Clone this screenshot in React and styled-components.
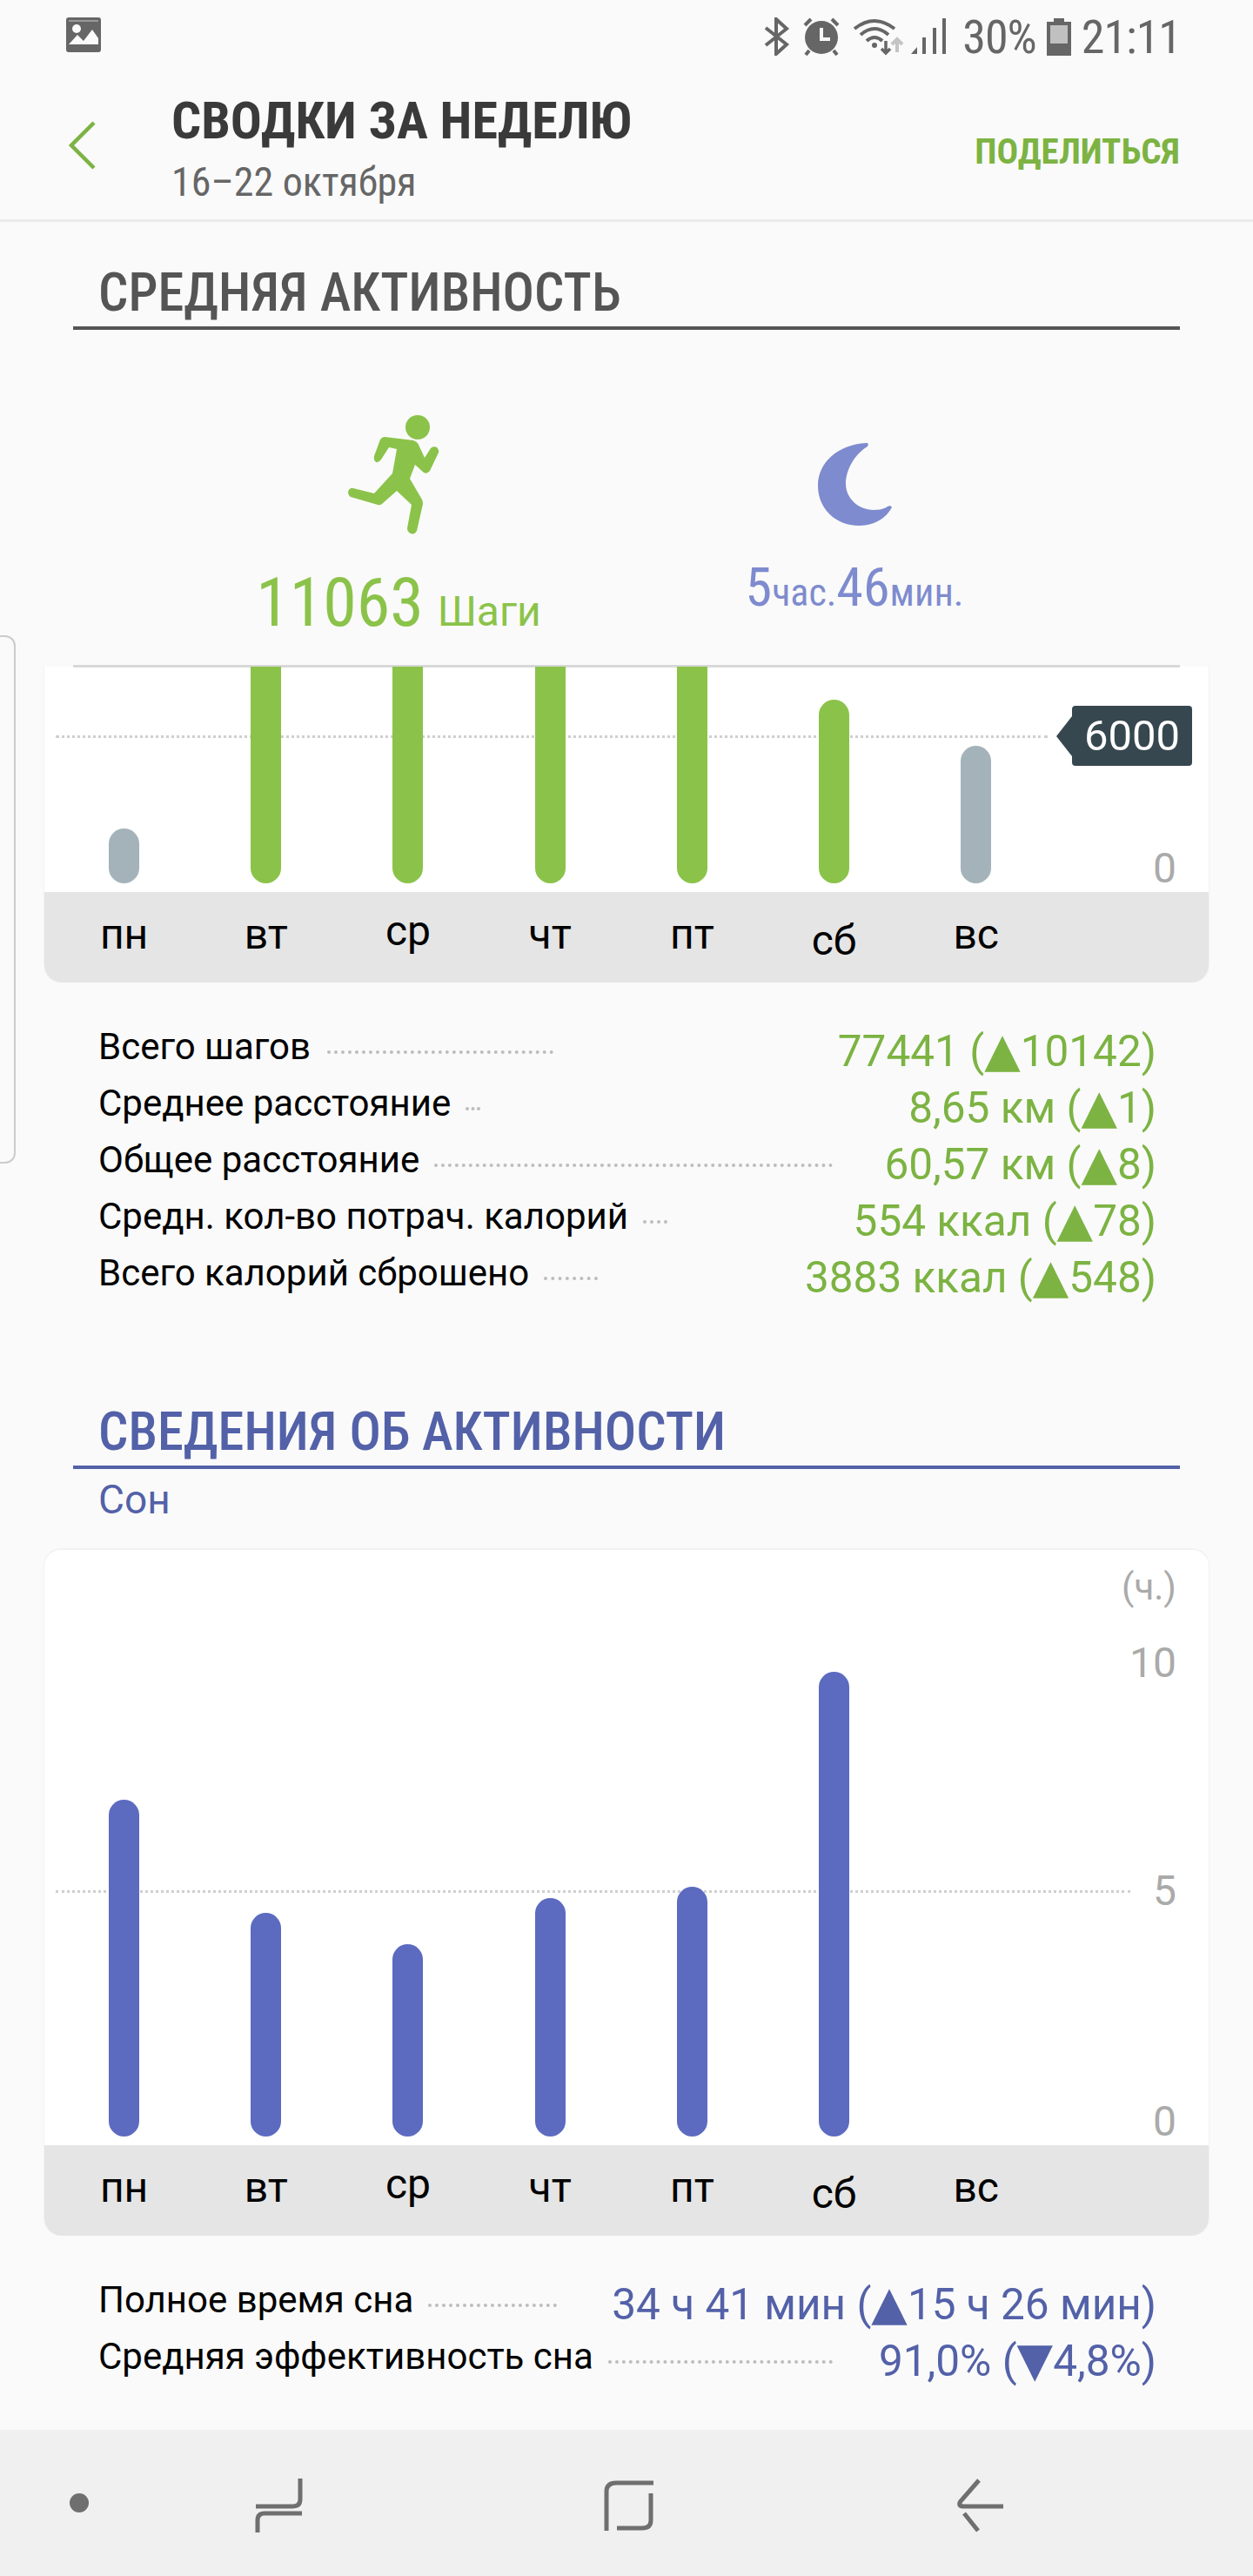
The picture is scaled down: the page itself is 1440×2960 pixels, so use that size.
import React from 'react';
import styled, { createGlobalStyle } from 'styled-components';

const GREEN = '#7cb342';
const BLUE = '#5361a8';

const GlobalStyle = createGlobalStyle`
  html, body { margin: 0; padding: 0; background: #fafafa; }
  * { box-sizing: border-box; }
  body { font-family: Roboto, "Noto Sans", sans-serif; }
`;

const Page = styled.div`
  position: relative;
  width: 1440px;
  height: 2960px;
  overflow: hidden;
  display: flex;
  flex-direction: column;
  background: #fafafa;
`;

const StatusBar = styled.div`
  height: 84px;
  flex: none;
  display: flex;
  align-items: flex-start;
  padding: 20px 83px 0 76px;
  color: #666;
`;
const StatusRight = styled.div`
  margin-left: auto;
  display: flex;
  align-items: flex-start;
`;
const StatusText = styled.span`
  font-size: 54px;
  line-height: 46px;
  font-stretch: 75%;
  letter-spacing: -1px;
  margin: ${p => p.$m || '0'};
`;

const Header = styled.header`
  height: 171px;
  flex: none;
  display: flex;
  border-bottom: 3px solid #ebebeb;
  padding: 0 84px 0 78px;
`;
const BackButton = styled.div`
  width: 119px;
  padding-top: 55px;
`;
const TitleBlock = styled.div`
  flex: 1;
`;
const Title = styled.h1`
  margin: 20px 0 0;
  font-size: 60px;
  line-height: 70px;
  font-weight: 700;
  font-stretch: 75%;
  color: #3a3a3a;
`;
const Subtitle = styled.div`
  margin-top: 10px;
  font-size: 46px;
  line-height: 50px;
  font-stretch: 75%;
  color: #666;
`;
const ShareButton = styled.div`
  margin-top: 64px;
  font-size: 41px;
  line-height: 52px;
  font-weight: 700;
  font-stretch: 75%;
  color: ${GREEN};
`;

const SectionHead = styled.h2`
  flex: none;
  height: ${p => p.$h}px;
  margin: 0 84px;
  padding: 0 0 5px 29px;
  display: flex;
  align-items: flex-end;
  font-size: 60.5px;
  line-height: 66px;
  font-weight: 500;
  font-stretch: 75%;
  color: ${p => p.$color};
  border-bottom: 4px solid ${p => p.$color};
`;
const SectionSub = styled.div`
  margin: 8px 113px 0;
  height: 83px;
  font-size: 46px;
  line-height: 54px;
  color: ${BLUE};
  font-stretch: 95%;
`;

const Summary = styled.section`
  flex: none;
  height: 387px;
  padding-left: 196px;
  display: grid;
  grid-template-columns: 524px 524px;
`;
const Metric = styled.div`
  display: flex;
  flex-direction: column;
  align-items: center;
  padding-top: ${p => p.$top}px;
`;
const MetricIcon = styled.div`
  margin-left: ${p => p.$shift || 0}px;
  line-height: 0;
`;
const MetricValue = styled.div`
  color: ${p => p.$color};
  margin-top: ${p => p.$gap}px;
  white-space: nowrap;
`;
const BigNumber = styled.span`
  font-size: ${p => p.$size}px;
  line-height: 90px;
  font-stretch: 85%;
`;
const SmallUnit = styled.span`
  font-size: ${p => p.$size}px;
  line-height: 90px;
  margin-left: ${p => p.$m || 0}px;
  font-stretch: ${p => p.$stretch || 85}%;
`;

const ChartCard = styled.section`
  position: relative;
  flex: none;
  margin: 0 50px;
  background: #fff;
  border-left: 1px solid #f2f2f2;
  border-right: 1px solid #f2f2f2;
  border-top: ${p => (p.$rounded ? '2px solid #f2f2f2' : 'none')};
  border-radius: ${p => (p.$rounded ? '20px 20px' : '0 0')} 20px 20px;
`;
const ScrollEdge = styled.div`
  position: absolute;
  top: -2px;
  left: 33px;
  right: 33px;
  height: 3px;
  background: #d8d8d8;
`;
const Plot = styled.div`
  position: relative;
  height: ${p => p.$h}px;
`;
const BarTrack = styled.div`
  height: 100%;
  overflow: hidden;
  display: grid;
  grid-template-columns: repeat(7, 163.2px);
  grid-template-rows: minmax(0, 1fr);
  padding: 0 0 10px 10px;
`;
const BarSlot = styled.div`
  display: flex;
  justify-content: center;
  align-items: flex-end;
  min-height: 0;
`;
const Bar = styled.div`
  position: relative;
  z-index: 1;
  flex: none;
  width: 35px;
  height: ${p => p.$h}px;
  border-radius: 18px;
  background: ${p => p.$color};
`;
const GoalLine = styled.div`
  position: absolute;
  left: 13px;
  width: ${p => p.$w}px;
  top: ${p => p.$y}px;
  border-top: 3px dotted #cfcfcf;
`;
const GoalTag = styled.div`
  position: absolute;
  z-index: 2;
  left: 1181px;
  top: 45px;
  width: 138px;
  height: 69px;
  background: #37474f;
  border-radius: 4px;
  color: #fff;
  font-size: 49px;
  line-height: 69px;
  text-align: center;
  &::before {
    content: '';
    position: absolute;
    left: -18px;
    top: 12px;
    border-style: solid;
    border-width: 23px 18px 23px 0;
    border-color: transparent #37474f transparent transparent;
  }
`;
const AxisLabel = styled.div`
  position: absolute;
  z-index: 2;
  right: 37px;
  top: ${p => p.$y}px;
  font-size: ${p => p.$size || 48}px;
  line-height: 50px;
  color: #aaa;
`;
const DayBand = styled.div`
  height: 104px;
  background: #e5e5e5;
  border-radius: 0 0 20px 20px;
  display: grid;
  grid-template-columns: repeat(7, 163.2px);
  padding-left: 10px;
`;
const Day = styled.div`
  text-align: center;
  font-size: 48px;
  line-height: 54px;
  padding-top: ${p => 22 + p.$shift}px;
  color: #000;
`;

const StatList = styled.div`
  flex: none;
  margin-top: 50px;
  height: ${p => p.$rows * 65}px;
  padding: 0 111px 0 113px;
`;
const StatRow = styled.div`
  height: 65px;
  display: flex;
  align-items: flex-start;
`;
const StatLabel = styled.span`
  font-size: 42px;
  line-height: 48px;
  color: #000;
  white-space: nowrap;
`;
const StatDots = styled.span`
  width: ${p => p.$w}px;
  margin: 28px 0 0 ${p => p.$m}px;
  border-top: 4px dotted #bdbdbd;
`;
const StatValue = styled.span`
  margin-left: auto;
  margin-top: 1px;
  font-size: 49.5px;
  line-height: 56px;
  white-space: nowrap;
  color: ${p => p.$color};
`;
const Trend = styled.span`
  font-family: "DejaVu Sans", sans-serif;
  font-size: 54px;
  line-height: 0;
`;

const NavBar = styled.nav`
  margin-top: auto;
  flex: none;
  height: 168px;
  background: #f0f0f0;
`;
const NavIcons = styled.svg`
  display: block;
`;
const EdgeHandle = styled.div`
  position: absolute;
  left: -20px;
  top: 730px;
  width: 38px;
  height: 607px;
  border: 2px solid #ccc;
  border-radius: 12px;
`;

const DAYS = ['пн', 'вт', 'ср', 'чт', 'пт', 'сб', 'вс'];
const DAY_SHIFT = [0, 0, -4, 0, 0, 7, 0];
const STEPS = [63, 320, 320, 320, 320, 211, 158];
const STEP_COLORS = ['#a4b3ba', '#8bc34a', '#8bc34a', '#8bc34a', '#8bc34a', '#8bc34a', '#a4b3ba'];
const SLEEP = [387, 257, 221, 274, 287, 534];

const ACTIVITY = [
  ['Всего шагов', 19, 260, '77441 (', '▲', '10142)'],
  ['Среднее расстояние', 17, 17, '8,65 км (', '▲', '1)'],
  ['Общее расстояние', 17, 458, '60,57 км (', '▲', '8)'],
  ['Средн. кол-во потрач. калорий', 17, 28, '554 ккал (', '▲', '78)'],
  ['Всего калорий сброшено', 17, 62, '3883 ккал (', '▲', '548)'],
];
const SLEEP_STATS = [
  ['Полное время сна', 17, 148, '34 ч 41 мин (', '▲', '15 ч 26 мин)'],
  ['Средняя эффективность сна', 17, 258, '91,0% (', '▼', '4,8%)'],
];

const Days = () => (
  <DayBand>
    {DAYS.map((d, i) => (
      <Day key={d} $shift={DAY_SHIFT[i]}>{d}</Day>
    ))}
  </DayBand>
);

const Stats = ({ rows, color }) => (
  <StatList $rows={rows.length}>
    {rows.map(([label, m, w, before, arrow, after]) => (
      <StatRow key={label}>
        <StatLabel>{label}</StatLabel>
        <StatDots $m={m} $w={w} />
        <StatValue $color={color}>{before}<Trend>{arrow}</Trend>{after}</StatValue>
      </StatRow>
    ))}
  </StatList>
);

const Runner = () => (
  <svg width="106" height="137" viewBox="0 0 106 137">
    <ellipse cx="80" cy="14" rx="14" ry="14" fill="#8bc34a" />
    <path
      fill="#8bc34a"
      d="M42 25 L75 29 Q80 31 81 34 L88 49 L95 38 Q98 35 102 37 Q105 40 104 43 L94 64 Q91 68 87 66 L77 57 L71 73 L85 97 Q86 99 86 102 L79 133 Q76 138 72 136 Q68 134 68 130 L73 103 L56 87 L39 102 Q37 104 34 103 L3 94 Q0 92 0 88 Q2 83 6 84 L30 90 L51 67 L56 39 L47 37 L38 51 Q35 55 32 54 Q29 52 30 47 L37 28 Q39 25 42 25 Z"
    />
  </svg>
);

const Moon = () => (
  <svg width="85" height="96" viewBox="0 0 85 96">
    <path
      fill="#7e8bcf"
      d="M56 1 C22 3 0 24 0 50 C0 76 20 96 47 96 C64 96 78 88 85 75 C84 73 82 73 80 74 C76 77 70 78 64 78 C46 78 32 64 32 48 C32 32 42 14 57 5 C58 3 58 1 56 1 Z"
    />
  </svg>
);

// bluetooth, alarm, wifi with arrows and signal, all in one strip
const StatusIcons = () => (
  <svg width="209" height="44" viewBox="0 0 209 44" fill="none">
    <path d="M2 12 L26 31 L14 42 V2 L26 13 L2 32" stroke="#666" strokeWidth="4" />
    <circle cx="66" cy="23" r="19" fill="#666" />
    <path d="M66 12 V25 H76" stroke="#fafafa" strokeWidth="4" />
    <path d="M47 9 L54 2 M85 9 L78 2 M52 38 L48 43 M80 38 L84 43" stroke="#666" strokeWidth="4" />
    <path d="M104 13 Q127 -5 150 13 M111 20 Q127 6 143 20 M118 27 Q127 19 136 27" stroke="#666" strokeWidth="4" />
    <circle cx="127" cy="32" r="3" fill="#666" />
    <path d="M140 27 V41 M135 36 L140 41 L145 36" stroke="#666" strokeWidth="3.5" />
    <path d="M153 40 V26 M147 31 L153 25 L159 31" stroke="#c4c4c4" strokeWidth="4" />
    <path d="M169 42 L176 34 V42 Z" fill="#666" />
    <rect x="182" y="23" width="4" height="19" fill="#666" />
    <rect x="194" y="12" width="4" height="30" fill="#666" />
    <rect x="205" y="1" width="4" height="41" fill="#666" />
  </svg>
);

const Battery = () => (
  <svg width="28" height="44" viewBox="0 0 28 44">
    <path d="M8 1 H20 V5 H28 V44 H0 V5 H8 Z" fill="#666" />
    <rect x="4" y="9" width="20" height="21" fill="#c0c0c0" />
  </svg>
);

const GalleryIcon = () => (
  <svg width="40" height="40" viewBox="0 0 40 40">
    <rect x="0" y="0" width="40" height="40" rx="3" fill="#666" />
    <rect x="3" y="3" width="34" height="2" fill="#999" />
    <circle cx="12" cy="13" r="5" fill="#fafafa" />
    <path d="M3 31 L13 20 L20 27 L30 14 L37 24 V7 H37 V31 Z" fill="#fafafa" />
  </svg>
);

const NavDrawing = () => (
  <NavIcons width="1440" height="168" viewBox="0 0 1440 168" fill="none">
    <ellipse cx="91" cy="84" rx="11" ry="11" fill="#6f6f6f" />
    <path d="M345 56 V80 Q345 88 336 88 H294" stroke="#6f6f6f" strokeWidth="5" />
    <path d="M296 118 V104 Q296 96 304 96 H347" stroke="#6f6f6f" strokeWidth="5" />
    <path d="M697 116 V71 Q697 61 708 61 H751" stroke="#6f6f6f" strokeWidth="5" />
    <path d="M748 73 V104 Q748 113 738 113 H709" stroke="#6f6f6f" strokeWidth="5" />
    <path d="M1125 58 L1104 82 Q1100 88 1108 88 H1153" stroke="#6f6f6f" strokeWidth="5" />
    <path d="M1108 96 L1124 116" stroke="#6f6f6f" strokeWidth="5" />
  </NavIcons>
);

export default function App() {
  return (
    <Page>
      <GlobalStyle />
      <EdgeHandle />
      <StatusBar>
        <GalleryIcon />
        <StatusRight>
          <StatusIcons />
          <StatusText $m="0 12px 0 19px">30%</StatusText>
          <Battery />
          <StatusText $m="0 0 0 12px">21:11</StatusText>
        </StatusRight>
      </StatusBar>
      <Header>
        <BackButton>
          <svg width="32" height="56" viewBox="0 0 32 56" fill="none">
            <path d="M30 2 L4 28 L30 54" stroke={GREEN} strokeWidth="4.5" />
          </svg>
        </BackButton>
        <TitleBlock>
          <Title>СВОДКИ ЗА НЕДЕЛЮ</Title>
          <Subtitle>16–22 октября</Subtitle>
        </TitleBlock>
        <ShareButton>ПОДЕЛИТЬСЯ</ShareButton>
      </Header>
      <SectionHead $h={124} $color="#555">СРЕДНЯЯ АКТИВНОСТЬ</SectionHead>
      <Summary>
        <Metric $top={98}>
          <MetricIcon $shift={-10}><Runner /></MetricIcon>
          <MetricValue $color="#8bc34a" $gap={34}>
            <BigNumber $size={78}>11063</BigNumber>
            <SmallUnit $size={48} $m={16} $stretch={100}>Шаги</SmallUnit>
          </MetricValue>
        </Metric>
        <Metric $top={129}>
          <MetricIcon><Moon /></MetricIcon>
          <MetricValue $color="#7e8bcf" $gap={26}>
            <BigNumber $size={62}>5</BigNumber>
            <SmallUnit $size={44}>час.</SmallUnit>
            <BigNumber $size={62}>46</BigNumber>
            <SmallUnit $size={44}>мин.</SmallUnit>
          </MetricValue>
        </Metric>
      </Summary>
      <ChartCard>
        <ScrollEdge />
        <Plot $h={259}>
          <GoalLine $y={79} $w={1140} />
          <GoalTag>6000</GoalTag>
          <AxisLabel $y={207}>0</AxisLabel>
          <BarTrack>
            {STEPS.map((h, i) => (
              <BarSlot key={i}><Bar $h={h} $color={STEP_COLORS[i]} /></BarSlot>
            ))}
          </BarTrack>
        </Plot>
        <Days />
      </ChartCard>
      <Stats rows={ACTIVITY} color={GREEN} />
      <SectionHead $h={184} $color={BLUE}>СВЕДЕНИЯ ОБ АКТИВНОСТИ</SectionHead>
      <SectionSub>Сон</SectionSub>
      <ChartCard $rounded>
        <Plot $h={684}>
          <GoalLine $y={391} $w={1235} />
          <AxisLabel $y={18} $size={42}>(ч.)</AxisLabel>
          <AxisLabel $y={105}>10</AxisLabel>
          <AxisLabel $y={367}>5</AxisLabel>
          <AxisLabel $y={632}>0</AxisLabel>
          <BarTrack>
            {SLEEP.map((h, i) => (
              <BarSlot key={i}><Bar $h={h} $color="#5c6bc0" /></BarSlot>
            ))}
          </BarTrack>
        </Plot>
        <Days />
      </ChartCard>
      <Stats rows={SLEEP_STATS} color={BLUE} />
      <NavBar>
        <NavDrawing />
      </NavBar>
    </Page>
  );
}
